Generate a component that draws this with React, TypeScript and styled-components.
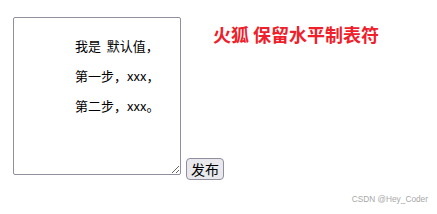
import styled, { createGlobalStyle } from "styled-components";

const GlobalStyle = createGlobalStyle`
  html, body {
    margin: 0;
    padding: 0;
    background: #ffffff;
  }
  body {
    font-family: "Liberation Sans", "Noto Sans CJK SC", sans-serif;
  }
`;

const defaultText = "\t我是  默认值，\n\n\t第一步，xxx，\n\n\t第二步，xxx。";

export default function App() {
  return (
    <StyledPage>
      <GlobalStyle />
      <StyledForm>
        <StyledTextarea defaultValue={defaultText} spellCheck={false} />
        <StyledSide>
          <StyledTitle>火狐 保留水平制表符</StyledTitle>
          <StyledButton type="button">发布</StyledButton>
        </StyledSide>
      </StyledForm>
      <StyledMark>CSDN @Hey_Coder</StyledMark>
    </StyledPage>
  );
}

const StyledPage = styled.div`
  position: relative;
  width: 437px;
  height: 214px;
  padding: 17px 0 0 13px;
  box-sizing: border-box;
  overflow: hidden;
`;

const StyledForm = styled.form`
  display: flex;
  gap: 5px;
  margin: 0;
`;

const StyledTextarea = styled.textarea`
  width: 168px;
  height: 158px;
  box-sizing: border-box;
  margin: 0;
  padding: 20px 2px 2px 2px;
  border: 1px solid #8f8f9d;
  border-radius: 2px;
  font-family: "Noto Sans CJK SC", sans-serif;
  font-size: 13px;
  line-height: 15px;
  color: #000000;
  tab-size: 59px;
  -moz-tab-size: 59px;
  white-space: pre-wrap;
  outline: none;
`;

const StyledSide = styled.div`
  display: flex;
  flex-direction: column;
  justify-content: space-between;
  align-items: flex-start;
  height: 163px;
`;

const StyledTitle = styled.h2`
  margin: 6px 0 0 27px;
  font-family: "Noto Sans CJK SC", sans-serif;
  font-size: 18px;
  font-weight: 700;
  line-height: 22px;
  color: #f0202a;
  white-space: nowrap;
`;

const StyledButton = styled.button`
  height: 22px;
  margin: 0;
  padding: 0 4px;
  font-family: "Noto Sans CJK SC", sans-serif;
  font-size: 14px;
  line-height: 18px;
  color: #000000;
  background: #e9e9ed;
  border: 1px solid #8f8f9d;
  border-radius: 4px;
`;

const StyledMark = styled.span`
  position: absolute;
  right: 9px;
  bottom: 10px;
  font-family: "Liberation Sans", sans-serif;
  font-size: 8.3px;
  color: #a8a8a8;
`;
